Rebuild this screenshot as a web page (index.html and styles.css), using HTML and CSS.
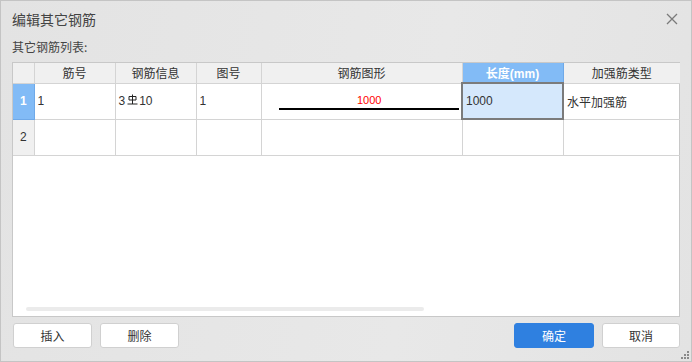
FILE: index.html
```html
<!DOCTYPE html>
<html>
<head>
<meta charset="utf-8"/>
<title>编辑其它钢筋</title>
<link rel="stylesheet" href="styles.css">
</head>
<body>
<div class="dialog">
	<div class="titlebar">
		<span class="title">编辑其它钢筋</span>
		<svg class="close" width="12" height="12" viewBox="0 0 12 12">
			<path d="M1 1 L11 11 M11 1 L1 11" stroke="#7a7a7a" stroke-width="1.3" fill="none"/>
		</svg>
	</div>
	<div class="caption">其它钢筋列表:</div>
	<div class="grid-box">
		<table class="grid">
			<colgroup>
				<col class="c-head"><col class="c-no"><col class="c-info"><col class="c-fig">
				<col class="c-shape"><col class="c-len"><col class="c-type">
			</colgroup>
			<tr class="hrow">
				<th></th><th>筋号</th><th>钢筋信息</th><th>图号</th><th>钢筋图形</th>
				<th class="hot">长度(mm)</th><th>加强筋类型</th>
			</tr>
			<tr>
				<td class="rowhead hot">1</td>
				<td>1</td>
				<td>3<svg class="grade" width="11" height="11" viewBox="0 0 11 11">
					<path d="M2 2.5 H9 V6 H2 Z M5.5 0.5 V10 M0.5 10 H10.5" stroke="#222" stroke-width="1" fill="none"/>
				</svg>10</td>
				<td>1</td>
				<td class="shape">
					<div class="shape-num">1000</div>
					<div class="shape-line"></div>
				</td>
				<td class="current">1000</td>
				<td>水平加强筋</td>
			</tr>
			<tr class="empty">
				<td class="rowhead">2</td>
				<td></td><td></td><td></td><td></td><td></td><td></td>
			</tr>
		</table>
		<div class="spacer"></div>
		<div class="hscroll"></div>
	</div>
	<div class="footer">
		<button class="btn">插入</button>
		<button class="btn">删除</button>
		<span class="push"></span>
		<button class="btn primary">确定</button>
		<button class="btn last">取消</button>
	</div>
	<svg class="grip" width="8" height="8" viewBox="0 0 8 8">
		<rect x="6" y="0" width="2" height="2" fill="#8a8a8a"/>
		<rect x="3" y="3" width="2" height="2" fill="#8a8a8a"/>
		<rect x="6" y="3" width="2" height="2" fill="#8a8a8a"/>
		<rect x="0" y="6" width="2" height="2" fill="#8a8a8a"/>
		<rect x="3" y="6" width="2" height="2" fill="#8a8a8a"/>
		<rect x="6" y="6" width="2" height="2" fill="#8a8a8a"/>
	</svg>
</div>
</body>
</html>
```

FILE: styles.css
```css
html, body {
	margin: 0;
	padding: 0;
}
body {
	font-family: "Liberation Sans", "Noto Sans CJK SC", sans-serif;
	color: #333;
	background-color: #e5e5e5;
}
.dialog {
	position: relative;
	width: 692px;
	height: 362px;
	box-sizing: border-box;
	border: 1px solid #c4c4c4;
	background: linear-gradient(100deg, #e3e3e3 0%, #e8e8e8 60%, #e3e3e3 100%);
	display: flex;
	flex-direction: column;
}
.titlebar {
	height: 36px;
	display: flex;
	align-items: center;
	justify-content: space-between;
	padding: 0 13px 0 11px;
}
.title {
	font-size: 14px;
	color: #444;
	font-family: "Noto Sans CJK SC", sans-serif;
}
.caption {
	font-size: 12px;
	color: #444;
	padding: 0 11px;
	height: 20px;
	line-height: 20px;
	font-family: "Noto Sans CJK SC", sans-serif;
}
.grid-box {
	margin: 5px 11px 0 11px;
	height: 255px;
	box-sizing: border-box;
	border: 1px solid #c8c8c8;
	background: #fff;
	display: flex;
	flex-direction: column;
}
.grid {
	border-collapse: collapse;
	table-layout: fixed;
	width: 667px;
	font-size: 12px;
}
.c-head { width: 21px; }
.c-no { width: 81px; }
.c-info { width: 81px; }
.c-fig { width: 65px; }
.c-shape { width: 201px; }
.c-len { width: 101px; }
.c-type { width: 117px; }
.grid th, .grid td {
	border: 1px solid #d4d4d4;
	padding: 0 3px;
	white-space: nowrap;
	overflow: hidden;
}
.grid tr:first-child th { border-top: none; }
.grid th:first-child, .grid td:first-child { border-left: none; }
.grid th:last-child, .grid td:last-child { border-right: none; }
.grid th {
	height: 19px;
	background: #f0f0f0;
	font-weight: normal;
	font-family: "Noto Sans CJK SC", sans-serif;
	color: #333;
	text-align: center;
	padding: 0;
}
.grid th.hot {
	background: #82bbf6;
	color: #fff;
	font-weight: bold;
	font-family: "Liberation Sans", "Noto Sans CJK SC", sans-serif;
	border: 1px solid #6fa9e8;
	border-top: none;
}
.grid td {
	height: 34px;
	vertical-align: middle;
	font-family: "Liberation Sans", "Noto Sans CJK SC", sans-serif;
	color: #333;
}
.grid tr.empty td {
	height: 35px;
}
.rowhead {
	background: #f0f0f0;
	text-align: center;
	padding: 0;
}
.rowhead.hot {
	background: #82bbf6;
	color: #fff;
	font-weight: bold;
	border: 1px solid #6fa9e8;
	border-left: none;
}
.grade {
	margin: 0 1px 0 2px;
	vertical-align: 0;
}
.shape-num {
	color: #f00;
	font-size: 11px;
	text-align: center;
	margin-left: 18px;
	margin-right: 2px;
	line-height: 12px;
	margin-top: 2px;
}
.shape-line {
	height: 2px;
	background: #000;
	margin: 2px 0 0 14px;
	width: 180px;
}
.grid td.current {
	background: #d5e8fc;
	border: 2px solid #7b7b7b;
	padding-left: 3px;
}
.spacer {
	flex: 1;
}
.hscroll {
	width: 398px;
	height: 4px;
	border-radius: 2px;
	background: #ebebeb;
	margin: 0 0 5px 13px;
}
.footer {
	display: flex;
	padding: 6px 11px 0 12px;
	gap: 8px;
}
.push {
	flex: 1;
}
.btn {
	width: 79px;
	height: 25px;
	box-sizing: border-box;
	border: 1px solid #d0d0d0;
	border-radius: 3px;
	background: #fff;
	font-family: "Noto Sans CJK SC", sans-serif;
	font-size: 12px;
	color: #333;
	padding: 0;
}
.btn.primary {
	width: 80px;
	background: #2f80e0;
	border-color: #2f80e0;
	color: #fff;
}
.btn.last {
	width: 78px;
}
.grip {
	position: absolute;
	right: 2px;
	bottom: 2px;
}
```
